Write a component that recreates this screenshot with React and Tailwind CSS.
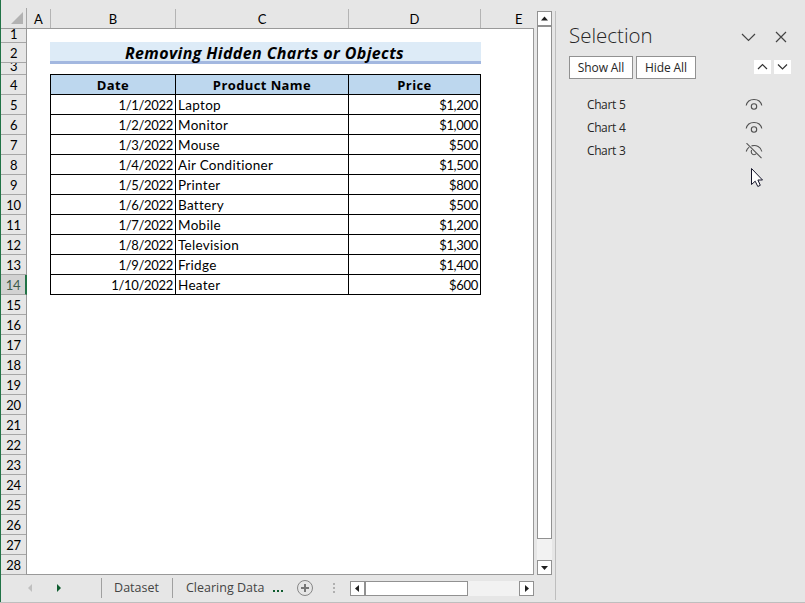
import React from "react";
import clsx from "clsx";

const columns = [
  { name: "A", width: "w-6" },
  { name: "B", width: "w-[125px]" },
  { name: "C", width: "w-[173px]" },
  { name: "D", width: "w-[132px]" },
];

const products = [
  { date: "1/1/2022", name: "Laptop", price: "$1,200" },
  { date: "1/2/2022", name: "Monitor", price: "$1,000" },
  { date: "1/3/2022", name: "Mouse", price: "$500" },
  { date: "1/4/2022", name: "Air Conditioner", price: "$1,500" },
  { date: "1/5/2022", name: "Printer", price: "$800" },
  { date: "1/6/2022", name: "Battery", price: "$500" },
  { date: "1/7/2022", name: "Mobile", price: "$1,200" },
  { date: "1/8/2022", name: "Television", price: "$1,300" },
  { date: "1/9/2022", name: "Fridge", price: "$1,400" },
  { date: "1/10/2022", name: "Heater", price: "$600" },
];

const rowNumbers = Array.from({ length: 28 }, (_, i) => i + 1);

const charts = [
  { name: "Chart 5", visible: true },
  { name: "Chart 4", visible: true },
  { name: "Chart 3", visible: false },
];

const ColumnHeader = () => {
  return (
    <div className="flex h-[29px] w-[533px] items-end border-b border-[#999999] text-[13px] leading-[20px]">
      <div className="flex h-[20px] w-[26px] items-end justify-end border-r border-[#a6a6a6] pr-[3px] pb-1">
        <svg width="12" height="12" className="block">
          <path d="M12 0V12H0Z" fill="#b2b2b2" />
        </svg>
      </div>
      {columns.map((column) => (
        <div
          key={column.name}
          className={clsx(
            "h-[19px] border-r border-[#b4b4b4] text-center",
            column.width
          )}
        >
          {column.name}
        </div>
      ))}
      <div className="h-[19px] flex-1 pl-[34px]">E</div>
    </div>
  );
};

const RowNumbers = () => {
  return (
    <div className="w-[26px] shrink-0 border-r border-[#999999] text-[13px] tracking-[-0.3px]">
      {rowNumbers.map((number) => (
        <div
          key={number}
          className={clsx(
            "flex justify-center overflow-hidden border-b border-[#a6a6a6]",
            number === 1 && "h-[14px] leading-[11px]",
            number === 3 && "h-[12px] leading-[7px]",
            number !== 1 && number !== 3 && "h-5 leading-[21px]",
            number === 14 &&
              "-mr-px border-r-2 border-r-[#217346] bg-[#d2d2d2] text-[#3c5a4a]"
          )}
        >
          {number}
        </div>
      ))}
    </div>
  );
};

const Cells = () => {
  return (
    <div className="flex-1 bg-white pl-[23px]">
      <div className="mt-[13px] h-[22px] w-[431px] border-b-[3px] border-[#a3b8e0] bg-[#ddebf7] pr-[2px] text-center font-['Open_Sans','Noto_Sans',sans-serif] text-[16px] leading-[23px] font-bold tracking-[0.38px] whitespace-nowrap italic">
        Removing Hidden Charts or Objects
      </div>
      <table className="mt-[10px] w-[431px] table-fixed border-collapse text-[13px] leading-[17px]">
        <colgroup>
          <col className="w-[125px]" />
          <col className="w-[173px]" />
          <col className="w-[132px]" />
        </colgroup>
        <thead>
          <tr className="h-5 bg-[#bdd7ee] font-['Open_Sans','Noto_Sans',sans-serif] text-[13px] tracking-[0.4px]">
            <th className="border border-black p-0 pt-[2px]">Date</th>
            <th className="border border-black p-0 pt-[2px]">Product Name</th>
            <th className="border border-black p-0 pt-[2px]">Price</th>
          </tr>
        </thead>
        <tbody>
          {products.map((product) => (
            <tr key={product.date} className="h-5">
              <td className="border border-black p-0 pt-[2px] pr-[2px] text-right tracking-[-0.3px]">
                {product.date}
              </td>
              <td className="border border-black p-0 pt-[2px] pl-[2px] text-[13.5px] tracking-[0.3px]">
                {product.name}
              </td>
              <td className="border border-black p-0 pt-[2px] pr-[2px] text-right tracking-[-0.3px]">
                {product.price}
              </td>
            </tr>
          ))}
        </tbody>
      </table>
    </div>
  );
};

const ScrollButton = ({ path }) => {
  return (
    <div className="size-[15px] shrink-0 border border-[#919191] bg-white">
      <svg width="13" height="13" className="block">
        <path d={path} fill="#1f1f1f" />
      </svg>
    </div>
  );
};

const VerticalScroll = () => {
  return (
    <div className="mt-[11px] ml-[3px] flex h-[564px] w-[15px] flex-col bg-[#f2f2f2]">
      <ScrollButton path="M3 8.5L6.5 4.5L10 8.5Z" />
      <div className="h-[513px] border border-[#919191] bg-white"></div>
      <div className="flex-1"></div>
      <ScrollButton path="M3 5L6.5 9L10 5Z" />
    </div>
  );
};

const SheetTabs = () => {
  return (
    <div className="flex h-[27px] w-[554px] items-start pt-[3px] font-['Open_Sans','Noto_Sans',sans-serif] text-[12.5px] leading-[20px] text-[#444444]">
      <div className="flex h-5 w-[100px] items-center pl-[27px]">
        <svg width="36" height="8" className="block">
          <path d="M4 0V8L0 4Z" fill="#c0c0c0" />
          <path d="M29 0V8L33 4Z" fill="#0e5c2f" />
        </svg>
      </div>
      <div className="h-5 w-[72px] border-x border-[#a0a0a0] pr-px text-center">
        Dataset
      </div>
      <div className="ml-[13px] w-[86px] whitespace-nowrap">Clearing Data</div>
      <div className="flex h-5 gap-[2px] pt-[12px] pl-[1px]">
        <i className="size-[2px] bg-[#0e5c2f]"></i>
        <i className="size-[2px] bg-[#0e5c2f]"></i>
        <i className="size-[2px] bg-[#0e5c2f]"></i>
      </div>
      <svg width="18" height="18" className="mt-[1px] ml-[13px]" fill="none">
        <circle cx="9" cy="9" r="7.5" stroke="#868686" />
        <path d="M9 5V13M5 9H13" stroke="#777777" strokeWidth="2" />
      </svg>
      <div className="mt-[5px] ml-[19px] flex w-[17px] flex-col gap-[2px]">
        <i className="size-[2px] bg-[#b0b0b0]"></i>
        <i className="size-[2px] bg-[#b0b0b0]"></i>
        <i className="size-[2px] bg-[#b0b0b0]"></i>
      </div>
      <div className="mt-[3px] flex h-[15px] w-[184px] bg-[#f2f2f2]">
        <ScrollButton path="M8 3L4 6.5L8 10Z" />
        <div className="w-[103px] border border-[#919191] bg-white"></div>
        <div className="flex-1"></div>
        <ScrollButton path="M5 3L9 6.5L5 10Z" />
      </div>
    </div>
  );
};

const EyeIcon = ({ visible }) => {
  return (
    <svg width="18" height="16" fill="none" stroke="#505050" strokeWidth="1.1">
      {visible ? (
        <>
          <path d="M1.2 8.5C2 4.8 5 2.5 9 2.5S16 4.8 16.8 8.5" />
          <circle cx="9" cy="9.5" r="2.7" />
        </>
      ) : (
        <>
          <path d="M1.2 8.5C1.7 6.5 2.7 5 4.2 4.1M6.5 2.9C11.5 1.7 15.8 3.8 16.8 8.5" />
          <path d="M6.6 7C5.5 9.3 7 11.7 9 11.7C10 11.7 10.8 11.3 11.3 10.5" />
          <path d="M1.5 0.2L16.5 15.2" />
        </>
      )}
    </svg>
  );
};

const SelectionPane = () => {
  return (
    <div className="mt-[11px] h-[589px] flex-1 border-l border-[#bebebe] pl-[13px] font-['Open_Sans','Noto_Sans',sans-serif] text-[12px] text-[#262626]">
      <div className="mt-[10px] flex h-[30px] items-center">
        <h1 className="-mt-[2px] w-[172px] text-[20.5px] leading-[30px] font-light text-[#262626]">
          Selection
        </h1>
        <svg width="48" height="14" fill="none" stroke="#444444" className="mt-[2px]">
          <path d="M1 4L7.5 10.5L14 4" strokeWidth="1.2" />
          <path d="M35 2L45 12M45 2L35 12" strokeWidth="1.2" />
        </svg>
      </div>
      <div className="mt-[5px] flex h-[23px]">
        <button className="h-[23px] w-16 border border-[#919191] bg-white tracking-[-0.1px]">
          Show All
        </button>
        <button className="ml-[3px] h-[23px] w-[60px] border border-[#919191] bg-white tracking-[-0.1px]">
          Hide All
        </button>
        <div className="mt-[4px] ml-[58px] flex gap-[3px]">
          <svg width="17" height="14" fill="none" stroke="#333333" className="bg-white">
            <path d="M4 9L8.5 4.5L13 9" strokeWidth="1.2" />
          </svg>
          <svg width="17" height="14" fill="none" stroke="#333333" className="bg-white">
            <path d="M4 4.5L8.5 9L13 4.5" strokeWidth="1.2" />
          </svg>
        </div>
      </div>
      <div className="mt-[14px] pl-[18px]">
        {charts.map((chart) => (
          <div key={chart.name} className="flex h-[23px] items-center">
            <span className="w-[158px] tracking-[-0.4px] [word-spacing:0.5px]">
              {chart.name}
            </span>
            <EyeIcon visible={chart.visible} />
          </div>
        ))}
      </div>
    </div>
  );
};

const Cursor = () => {
  return (
    <svg width="14" height="21" className="absolute top-[167px] left-[750px]">
      <path
        d="M1.5 1.5V17.5L5.2 14.2L7.8 19.5L10.3 18.3L7.9 13H12.5Z"
        fill="white"
        stroke="#15152a"
      />
    </svg>
  );
};

const App = () => {
  return (
    <div className="relative flex h-[603px] w-[805px] flex-col overflow-hidden border-b border-[#bebebe] bg-[#e6e6e6] font-[Lato,sans-serif] text-black">
      <div className="flex h-[602px]">
        <div className="w-[555px] border-l border-[#217346]">
          <div className="flex h-[575px]">
            <div className="w-[533px]">
              <ColumnHeader />
              <div className="flex h-[546px] border-r border-b border-[#999999]">
                <RowNumbers />
                <Cells />
              </div>
            </div>
            <VerticalScroll />
          </div>
          <SheetTabs />
        </div>
        <SelectionPane />
      </div>
      <Cursor />
    </div>
  );
};

export default App;
